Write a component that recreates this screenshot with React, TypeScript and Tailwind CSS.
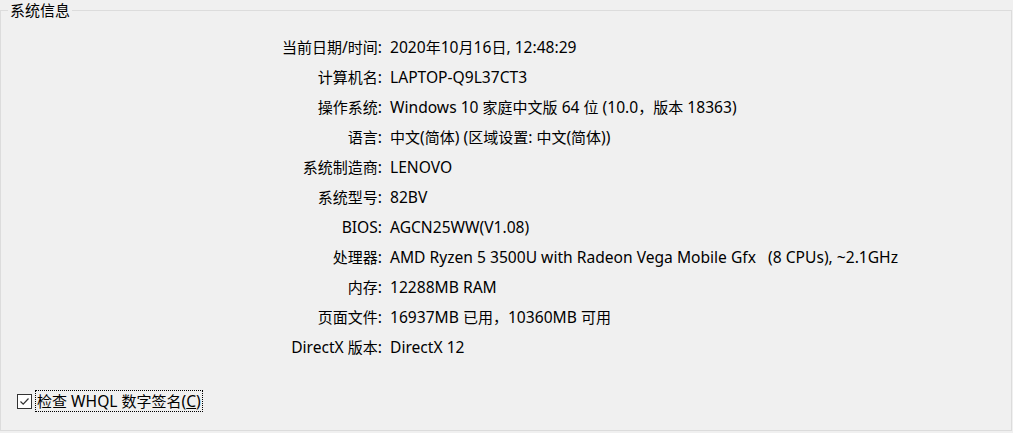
import React from "react";

const rows: [string, string][] = [
  ["当前日期/时间:", "2020年10月16日, 12:48:29"],
  ["计算机名:", "LAPTOP-Q9L37CT3"],
  ["操作系统:", "Windows 10 家庭中文版 64 位 (10.0，版本 18363)"],
  ["语言:", "中文(简体) (区域设置: 中文(简体))"],
  ["系统制造商:", "LENOVO"],
  ["系统型号:", "82BV"],
  ["BIOS:", "AGCN25WW(V1.08)"],
  ["处理器:", "AMD Ryzen 5 3500U with Radeon Vega Mobile Gfx   (8 CPUs), ~2.1GHz"],
  ["内存:", "12288MB RAM"],
  ["页面文件:", "16937MB 已用，10360MB 可用"],
  ["DirectX 版本:", "DirectX 12"],
];

// Latin runs are set a touch larger than the CJK glyphs, as the UI font does.
const cjk = /([\u3000-\u303f\u4e00-\u9fff\uff00-\uffef]+)/;

function Mixed({ text }: { text: string }) {
  return (
    <>
      {text.split(cjk).map((part, i) =>
        part === "" ? null : cjk.test(part) ? (
          <span key={i}>{part}</span>
        ) : (
          <span key={i} className="text-[15.6px]">
            {part}
          </span>
        )
      )}
    </>
  );
}

export default function App() {
  return (
    <div
      className="w-[1013px] h-[433px] bg-[#f0f0f0] text-black text-[15px] overflow-hidden"
      style={{ fontFamily: '"Noto Sans", "Noto Sans CJK SC", sans-serif' }}
    >
      <fieldset className="w-[1012px] h-[431px] border border-[#dcdcdc] m-0 p-0 min-w-0">
        <legend className="ml-[7px] px-[2px] h-[20px] leading-[20px]">系统信息</legend>
        <div className="pt-[12px]">
          {rows.map(([k, v]) => (
            <div key={k} className="flex h-[30px] items-center leading-[20px]">
              <div className="w-[381px] text-right shrink-0 whitespace-pre">
                <Mixed text={k} />
              </div>
              <div className="pl-[8px] whitespace-pre">
                <Mixed text={v} />
              </div>
            </div>
          ))}
        </div>
        <div className="flex items-center h-[22px] mt-[28px] ml-[16px]">
          <div className="w-[15px] h-[15px] border border-[#333] bg-white flex items-center justify-center">
            <svg width="11" height="11" viewBox="0 0 11 11">
              <path d="M1.5 5.5 L4.2 8.2 L9.5 2.5" fill="none" stroke="#333" strokeWidth="1.2" />
            </svg>
          </div>
          <div className="ml-[3px] px-[1px] border border-dotted border-black leading-[20px] whitespace-pre">
            检查<span className="text-[15.6px]"> WHQL </span>数字签名
            <span className="text-[15.6px]">
              (<span className="underline">C</span>)
            </span>
          </div>
        </div>
      </fieldset>
    </div>
  );
}
